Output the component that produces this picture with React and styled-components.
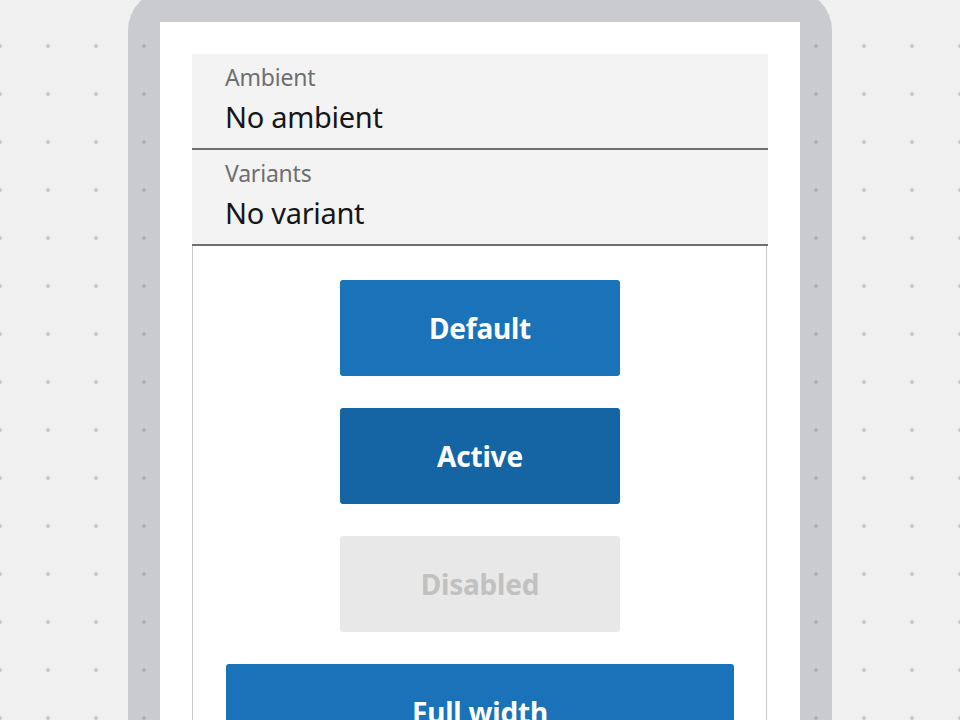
import React from "react";
import styled, { createGlobalStyle } from "styled-components";

const Global = createGlobalStyle`
  html, body {
    margin: 0;
    padding: 0;
    height: 100%;
    overflow: hidden;
  }
  body {
    background-color: #f0f0f0;
    background-image: radial-gradient(circle, #cbcbcb 1.6px, transparent 2.2px);
    background-size: 48px 48px;
    background-position: -24px 22px;
    font-family: "Noto Sans", "Open Sans", sans-serif;
  }
`;

const Frame = styled.div`
  width: 640px;
  margin: -10px auto 0;
  padding: 32px 32px 0;
  border-radius: 40px 40px 0 0;
  background: rgba(120, 124, 134, 0.32);
  height: 760px;
`;

const Screen = styled.div`
  background: #ffffff;
  height: 100%;
  padding: 32px;
  box-sizing: border-box;
  display: flex;
  flex-direction: column;
`;

const Field = styled.div`
  flex: none;
  background: #f3f3f3;
  border-bottom: 2px solid #6f6f6f;
  height: 96px;
  padding: 8px 32px 0 33px;
  box-sizing: border-box;
  display: flex;
  flex-direction: column;
`;

const Label = styled.div`
  font-size: 23px;
  line-height: 30px;
  color: #6f6f6f;
  letter-spacing: -0.2px;
`;

const Value = styled.div`
  font-size: 29px;
  line-height: 40px;
  color: #161616;
  margin-top: 5px;
  letter-spacing: -0.3px;
`;

const Stage = styled.div`
  border: 1px solid #c9c9c9;
  border-top: none;
  margin-right: 1px;
  padding: 34px 32px 40px 33px;
  display: flex;
  flex-direction: column;
  align-items: center;
  gap: 32px;
  flex: none;
`;

const tones = {
  default: { bg: "#1a73b8", fg: "#ffffff" },
  active: { bg: "#1565a5", fg: "#ffffff" },
  disabled: { bg: "#e8e8e8", fg: "#c1c1c1" },
};

const Button = styled.button`
  width: ${(p) => (p.$full ? "100%" : "280px")};
  height: 96px;
  flex: none;
  border: none;
  border-radius: 3px;
  background: ${(p) => tones[p.$tone].bg};
  color: ${(p) => tones[p.$tone].fg};
  font-family: "Noto Sans", sans-serif;
  font-weight: 700;
  font-size: 28px;
  letter-spacing: -0.2px;
  cursor: ${(p) => (p.$tone === "disabled" ? "default" : "pointer")};
  padding: 0;
`;

export default function App() {
  return (
    <>
      <Global />
      <Frame>
        <Screen>
          <Field>
            <Label>Ambient</Label>
            <Value>No ambient</Value>
          </Field>
          <Field>
            <Label>Variants</Label>
            <Value>No variant</Value>
          </Field>
          <Stage>
            <Button $tone="default">Default</Button>
            <Button $tone="active">Active</Button>
            <Button $tone="disabled" disabled>
              Disabled
            </Button>
            <Button $tone="default" $full>
              Full width
            </Button>
          </Stage>
        </Screen>
      </Frame>
    </>
  );
}
